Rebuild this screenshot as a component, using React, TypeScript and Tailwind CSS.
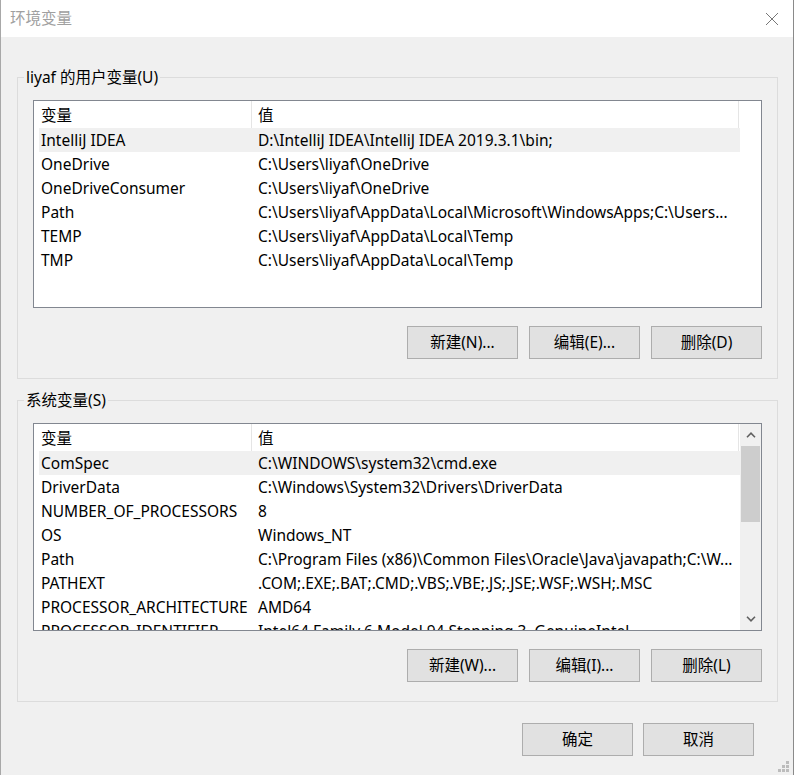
import React from "react";

const userVars: [string, string][] = [
  ["IntelliJ IDEA", "D:\\IntelliJ IDEA\\IntelliJ IDEA 2019.3.1\\bin;"],
  ["OneDrive", "C:\\Users\\liyaf\\OneDrive"],
  ["OneDriveConsumer", "C:\\Users\\liyaf\\OneDrive"],
  ["Path", "C:\\Users\\liyaf\\AppData\\Local\\Microsoft\\WindowsApps;C:\\Users..."],
  ["TEMP", "C:\\Users\\liyaf\\AppData\\Local\\Temp"],
  ["TMP", "C:\\Users\\liyaf\\AppData\\Local\\Temp"],
];

const sysVars: [string, string][] = [
  ["ComSpec", "C:\\WINDOWS\\system32\\cmd.exe"],
  ["DriverData", "C:\\Windows\\System32\\Drivers\\DriverData"],
  ["NUMBER_OF_PROCESSORS", "8"],
  ["OS", "Windows_NT"],
  ["Path", "C:\\Program Files (x86)\\Common Files\\Oracle\\Java\\javapath;C:\\W..."],
  ["PATHEXT", ".COM;.EXE;.BAT;.CMD;.VBS;.VBE;.JS;.JSE;.WSF;.WSH;.MSC"],
  ["PROCESSOR_ARCHITECTURE", "AMD64"],
  ["PROCESSOR_IDENTIFIER", "Intel64 Family 6 Model 94 Stepping 3, GenuineIntel"],
];

function Chevron({ down }: { down?: boolean }) {
  return (
    <svg width="10" height="6" viewBox="0 0 10 6" className={down ? "rotate-180" : ""}>
      <path d="M1 5.2 L5 1.2 L9 5.2" fill="none" stroke="#606060" strokeWidth="1.6" />
    </svg>
  );
}

function VarList({ rows, scroll }: { rows: [string, string][]; scroll?: boolean }) {
  return (
    <div className="h-[208px] border border-[#828790] bg-white flex overflow-hidden">
      <div className="w-[706px] flex flex-col">
        <div className="flex h-[27px] w-[705px] shrink-0 text-black">
          <div className="w-[218px] pl-[7px] pt-[3px] border-r border-[#e5e5e5]">变量</div>
          <div className="flex-1 pl-[6px] pt-[3px] border-r border-[#e5e5e5]">值</div>
        </div>
        {rows.map(([name, value], i) => (
          <div
            key={name}
            className={`flex h-[24px] shrink-0 ml-[5px] w-[701px] pt-[2px] items-center whitespace-nowrap ${
              i === 0 ? "bg-[#f0f0f0]" : ""
            }`}
          >
            <div className="w-[213px] pl-[2px] overflow-hidden">{name}</div>
            <div className="flex-1 pl-[6px] overflow-hidden">{value}</div>
          </div>
        ))}
      </div>
      {scroll && (
        <div className="w-[21px] bg-[#f0f0f0] flex flex-col">
          <div className="h-[22px] flex items-center justify-center">
            <Chevron />
          </div>
          <div className="h-[76px] mx-[1px] bg-[#cdcdcd]" />
          <div className="flex-1" />
          <div className="h-[22px] flex items-center justify-center">
            <Chevron down />
          </div>
        </div>
      )}
    </div>
  );
}

function Btn({ label }: { label: string }) {
  return (
    <button className="w-[111px] h-[33px] bg-[#e1e1e1] border border-[#adadad] text-black flex items-center justify-center">
      {label}
    </button>
  );
}

function Group({
  title,
  rows,
  scroll,
  buttons,
}: {
  title: string;
  rows: [string, string][];
  scroll?: boolean;
  buttons: string[];
}) {
  return (
    <fieldset className="ml-[16px] w-[761px] border border-[#dcdcdc]">
      <legend className="ml-[6px] px-[2px] leading-[20px] text-black">{title}</legend>
      <div className="px-[15px] pt-[13px] pb-[19px]">
        <VarList rows={rows} scroll={scroll} />
        <div className="mt-[18px] flex justify-end gap-[11px]">
          {buttons.map((b) => (
            <Btn key={b} label={b} />
          ))}
        </div>
      </div>
    </fieldset>
  );
}

export default function App() {
  return (
    <div className="relative w-[794px] h-[775px] bg-[#f0f0f0] border-l border-r border-l-[#a8a8a8] border-r-[#8a8a8a] flex flex-col text-[15.5px] font-['Noto_Sans','Noto_Sans_CJK_SC',sans-serif] overflow-hidden">
      <div className="h-[37px] shrink-0 bg-white flex items-center justify-between pl-[9px] pr-[14px]">
        <span className="text-[#a0a0a0]">环境变量</span>
        <svg width="14" height="14" viewBox="0 0 14 14">
          <path d="M1 1 L13 13 M13 1 L1 13" stroke="#777" strokeWidth="1" />
        </svg>
      </div>

      <div className="mt-[30px]">
        <Group
          title="liyaf 的用户变量(U)"
          rows={userVars}
          buttons={["新建(N)...", "编辑(E)...", "删除(D)"]}
        />
      </div>

      <div className="mt-[11px]">
        <Group
          title="系统变量(S)"
          rows={sysVars}
          scroll
          buttons={["新建(W)...", "编辑(I)...", "删除(L)"]}
        />
      </div>

      <div className="mt-[21px] flex justify-end gap-[10px] pr-[39px]">
        <Btn label="确定" />
        <Btn label="取消" />
      </div>

      <svg
        className="absolute right-[3px] bottom-[2px]"
        width="12"
        height="12"
        viewBox="0 0 12 12"
      >
        <rect x="8" y="0" width="3" height="3" fill="#bcbcbc" />
        <rect x="4" y="4" width="3" height="3" fill="#bcbcbc" />
        <rect x="8" y="4" width="3" height="3" fill="#bcbcbc" />
        <rect x="0" y="8" width="3" height="3" fill="#bcbcbc" />
        <rect x="4" y="8" width="3" height="3" fill="#bcbcbc" />
        <rect x="8" y="8" width="3" height="3" fill="#bcbcbc" />
      </svg>
    </div>
  );
}
